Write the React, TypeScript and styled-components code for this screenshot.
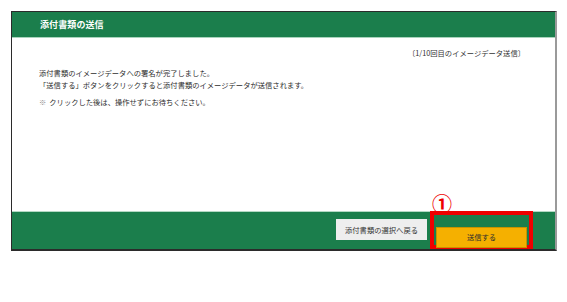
import React from "react";
import styled, { createGlobalStyle } from "styled-components";

const GlobalStyle = createGlobalStyle`
  html, body {
    margin: 0;
    padding: 0;
    background: #ffffff;
  }
  body {
    font-family: "Noto Sans CJK JP", "Noto Sans", sans-serif;
    color: #333333;
  }
`;

const GREEN = "#1b7e4c";

// Внешняя страница
const Page = styled.div`
  padding: 11px;
`;

// Рамка окна
const Frame = styled.div`
  box-sizing: border-box;
  width: 546px;
  height: 240px;
  display: flex;
  flex-direction: column;
  border-top: 1px solid #2b2b2b;
  border-left: 1px solid #2b2b2b;
  border-right: 2px solid #9a9a9a;
  border-bottom: 2px solid #2b2b2b;
  background: #ffffff;
`;

const Header = styled.div`
  height: 25px;
  display: flex;
  align-items: center;
  padding-left: 28px;
  background: ${GREEN};
  border-bottom: 1px solid #a9d3bc;
`;

const Title = styled.h1`
  margin: 0;
  font-size: 9px;
  font-weight: 700;
  color: #ffffff;
  letter-spacing: 0.1px;
`;

const Body = styled.div`
  flex: 1;
  display: flex;
  flex-direction: column;
  padding: 9px 30px 0 27px;
  font-size: 7.3px;
  line-height: 12px;
`;

const Note = styled.div`
  align-self: flex-end;
  color: #333333;
`;

const Message = styled.p<{ $gap?: number }>`
  margin: ${({ $gap }) => $gap ?? 0}px 0 0;
  color: #2e2e2e;
`;

// Значок примечания
const Mark = styled.span`
  font-family: "Noto Sans CJK JP", sans-serif;
  color: #8a8a8a;
  margin-right: 3px;
`;

const Footer = styled.div`
  height: 38px;
  display: flex;
  justify-content: flex-end;
  align-items: stretch;
  gap: 3px;
  padding-right: 22px;
  background: ${GREEN};
  box-shadow: inset 0 1px 0 #b4d9c4;
`;

const BackButton = styled.button`
  align-self: center;
  margin-top: -1px;
  width: 91px;
  height: 21px;
  padding: 0;
  border: none;
  background: #eeeeee;
  font-family: inherit;
  font-size: 7.3px;
  color: #333333;
  cursor: pointer;
`;

// Красная рамка-указатель вокруг кнопки
const Highlight = styled.div`
  position: relative;
  box-sizing: border-box;
  width: 103px;
  border: 4px solid #ee0000;
  padding: 6px 2px 3px 2px;
`;

const StepMark = styled.span`
  position: absolute;
  left: -2px;
  bottom: 100%;
  font-size: 20px;
  font-weight: 700;
  line-height: 22px;
  color: #ee0000;
`;

const SendButton = styled.button`
  box-sizing: border-box;
  width: 91px;
  height: 21px;
  padding: 0;
  border: 1px solid #c79300;
  background: #f5b000;
  font-family: inherit;
  font-size: 7.3px;
  color: #2e2e2e;
  cursor: pointer;
`;

export default function App() {
  return (
    <>
      <GlobalStyle />
      <Page>
        <Frame>
          <Header>
            <Title>添付書類の送信</Title>
          </Header>
          <Body>
            <Note>〔1/10回目のイメージデータ送信〕</Note>
            <Message $gap={8}>添付書類のイメージデータへの署名が完了しました。</Message>
            <Message>「送信する」ボタンをクリックすると添付書類のイメージデータが送信されます。</Message>
            <Message $gap={5}>
              <Mark>※</Mark>クリックした後は、操作せずにお待ちください。
            </Message>
          </Body>
          <Footer>
            <BackButton>添付書類の選択へ戻る</BackButton>
            <Highlight>
              <StepMark>①</StepMark>
              <SendButton>送信する</SendButton>
            </Highlight>
          </Footer>
        </Frame>
      </Page>
    </>
  );
}
